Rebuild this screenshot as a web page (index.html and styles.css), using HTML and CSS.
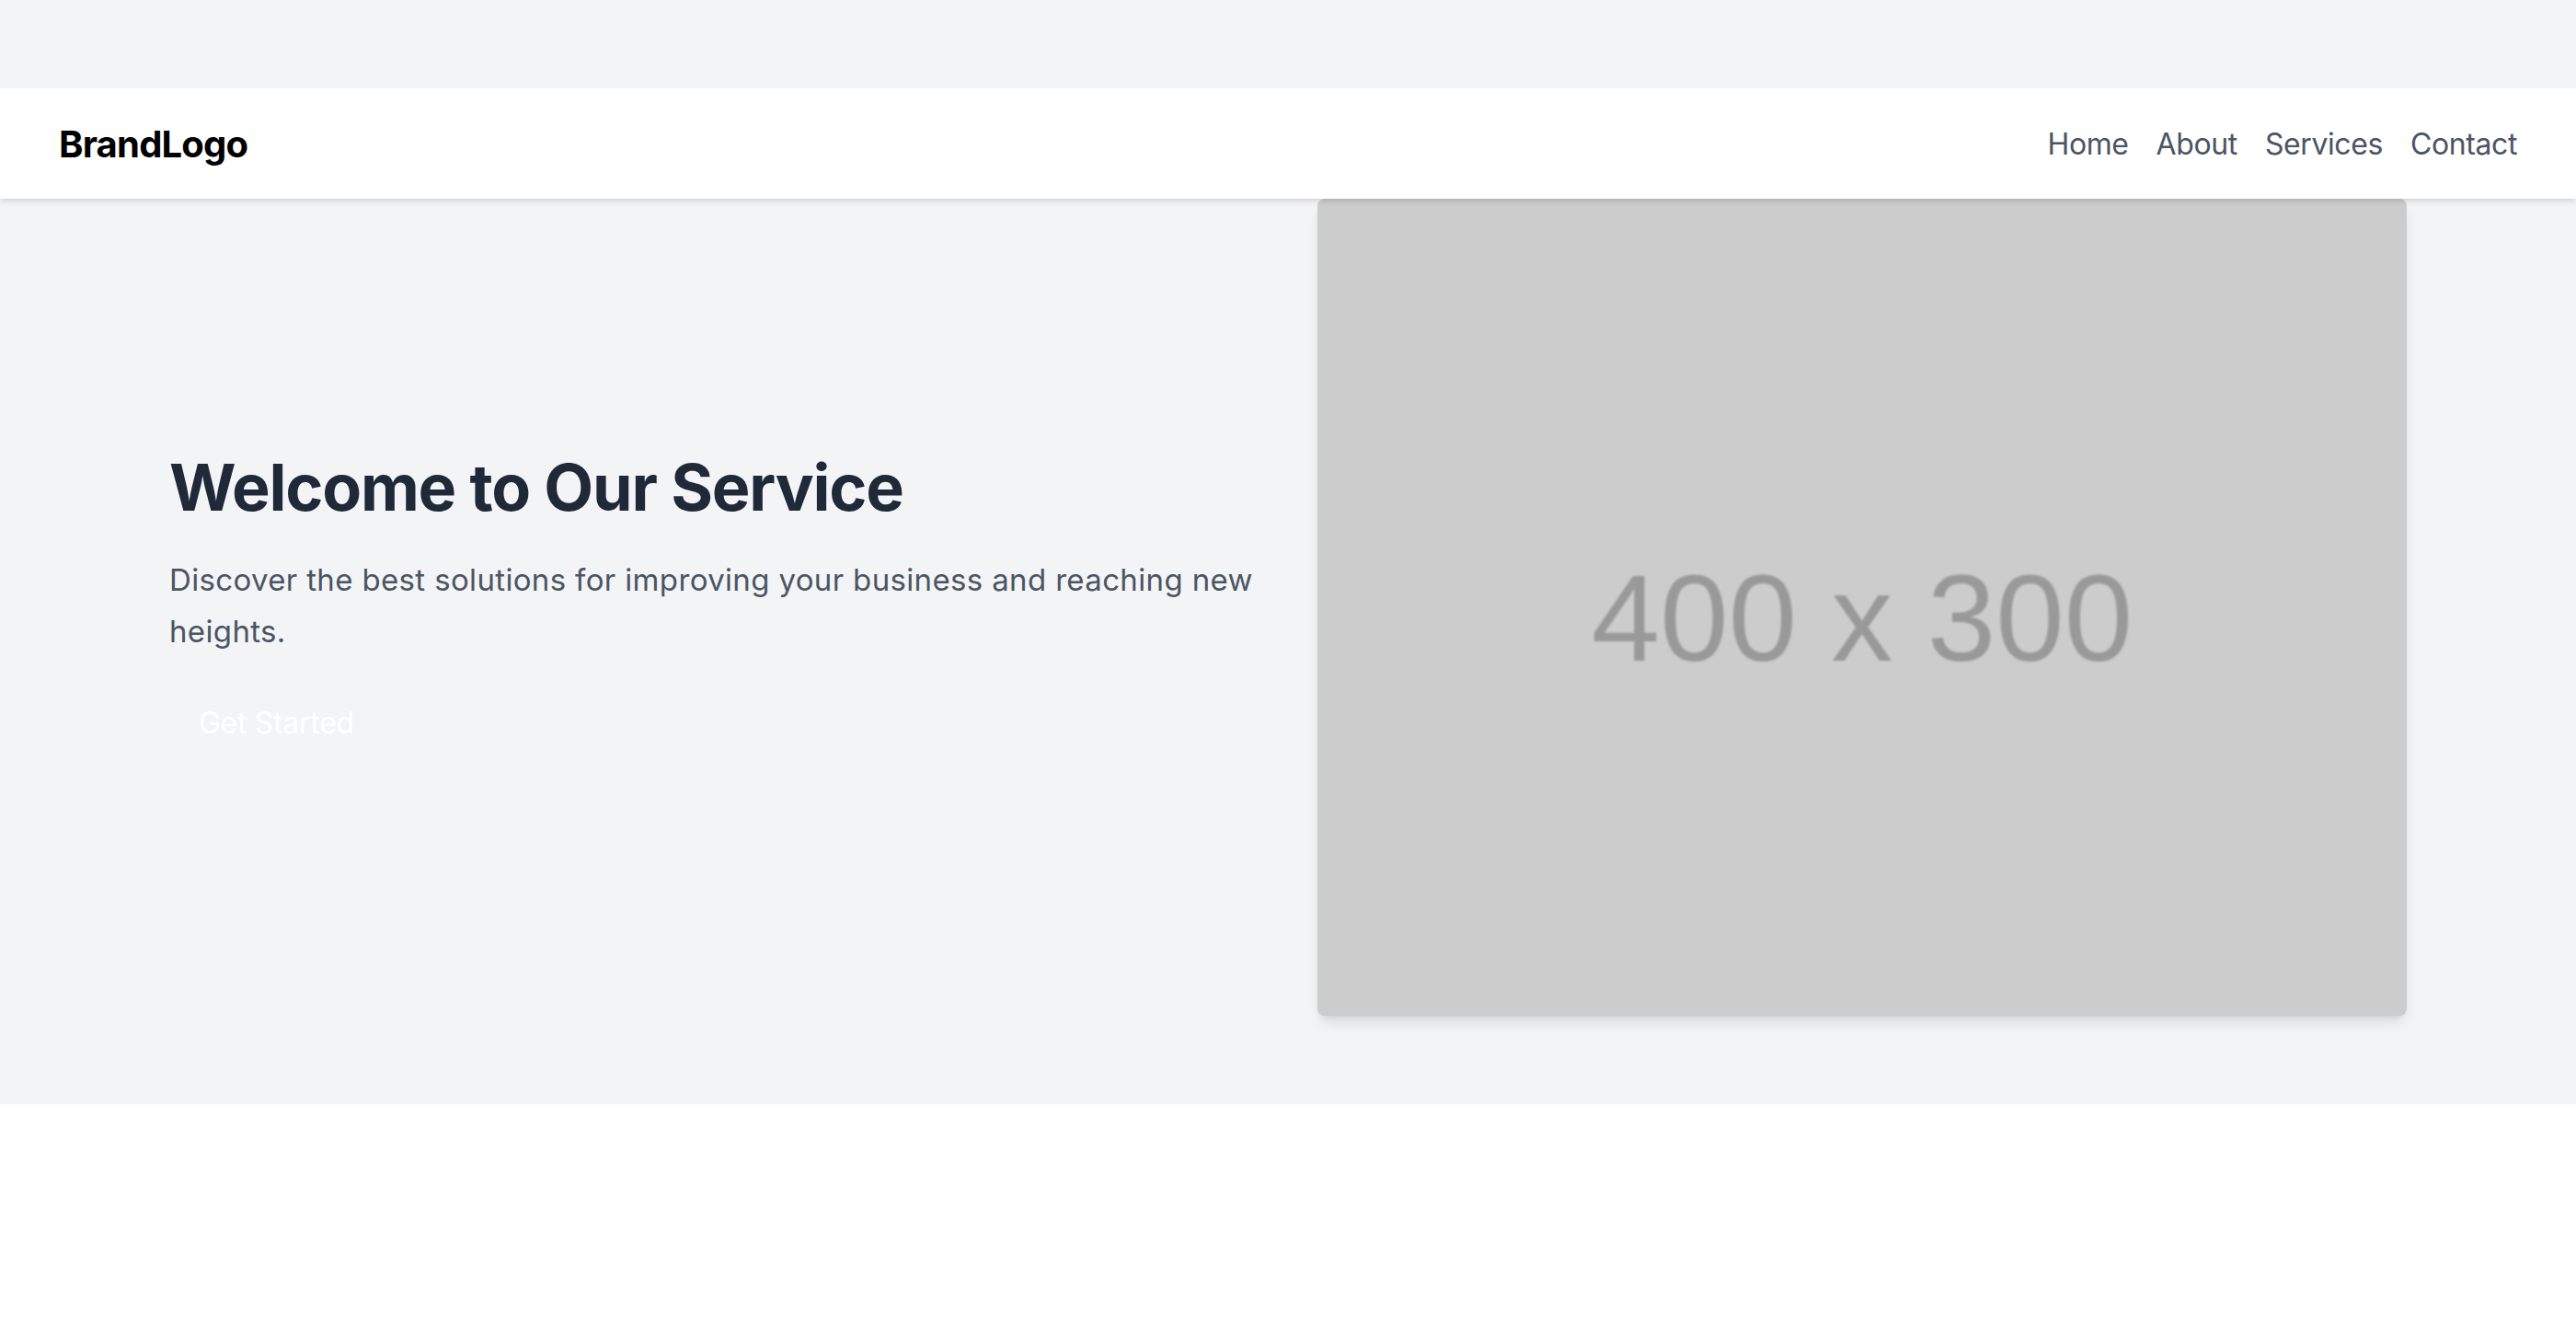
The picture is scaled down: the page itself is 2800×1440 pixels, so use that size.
FILE: index.html
```html
<!DOCTYPE html>
<html lang="en">
<head>
<meta charset="utf-8">
<title>Welcome to Our Service</title>
<link rel="stylesheet" href="styles.css">
</head>
<body>
<div class="page">
  <header class="nav">
    <div class="brand">BrandLogo</div>
    <nav class="links">
      <a href="#">Home</a>
      <a href="#">About</a>
      <a href="#">Services</a>
      <a href="#">Contact</a>
    </nav>
  </header>
  <main class="hero">
    <div class="hero-text">
      <h1>Welcome to Our Service</h1>
      <p>Discover the best solutions for improving your business and reaching new heights.</p>
      <a class="btn" href="#">Get Started</a>
    </div>
    <div class="placeholder"><span>400 x 300</span></div>
  </main>
</div>
</body>
</html>
```

FILE: styles.css
```css
html, body {
  margin: 0;
  padding: 0;
  background: #ffffff;
}
body {
  font-family: Inter, "Noto Sans", sans-serif;
}
.page {
  background: #f3f4f6;
  padding: 96px 0;
}
.nav {
  position: relative;
  z-index: 1;
  background: #ffffff;
  height: 120px;
  padding: 0 64px;
  display: flex;
  align-items: center;
  justify-content: space-between;
  box-shadow: 0 4px 6px -1px rgba(0,0,0,0.1), 0 2px 4px -2px rgba(0,0,0,0.1);
}
.brand {
  font-size: 40px;
  font-weight: 700;
  color: #000000;
  letter-spacing: -0.8px;
}
.links {
  display: flex;
  gap: 30px;
}
.links a {
  font-size: 32px;
  color: #4b5563;
  text-decoration: none;
  letter-spacing: -0.4px;
}
.hero {
  max-width: 2432px;
  margin: 0 auto;
  display: grid;
  grid-template-columns: 1fr 1fr;
  gap: 64px;
  align-items: center;
}
.hero-text h1 {
  margin: 0 0 36px;
  font-size: 70px;
  line-height: 72px;
  font-weight: 700;
  color: #1f2937;
  letter-spacing: -1.2px;
}
.hero-text p {
  margin: 0;
  font-size: 33px;
  line-height: 56px;
  color: #4b5563;
  letter-spacing: 0.35px;
}
.btn {
  display: inline-block;
  margin-top: 32px;
  padding: 16px 32px;
  font-size: 32px;
  line-height: 48px;
  color: #ffffff;
  text-decoration: none;
  letter-spacing: -0.3px;
}
.placeholder {
  aspect-ratio: 4 / 3;
  background: #cccccc;
  border-radius: 8px;
  box-shadow: 0 10px 15px -3px rgba(0,0,0,0.1), 0 4px 6px -4px rgba(0,0,0,0.1);
  display: flex;
  align-items: center;
  justify-content: center;
}
.placeholder span {
  font-family: "Liberation Sans", Arial, sans-serif;
  font-size: 134px;
  color: #999999;
  filter: blur(0.8px);
  padding-top: 22px;
}
```
